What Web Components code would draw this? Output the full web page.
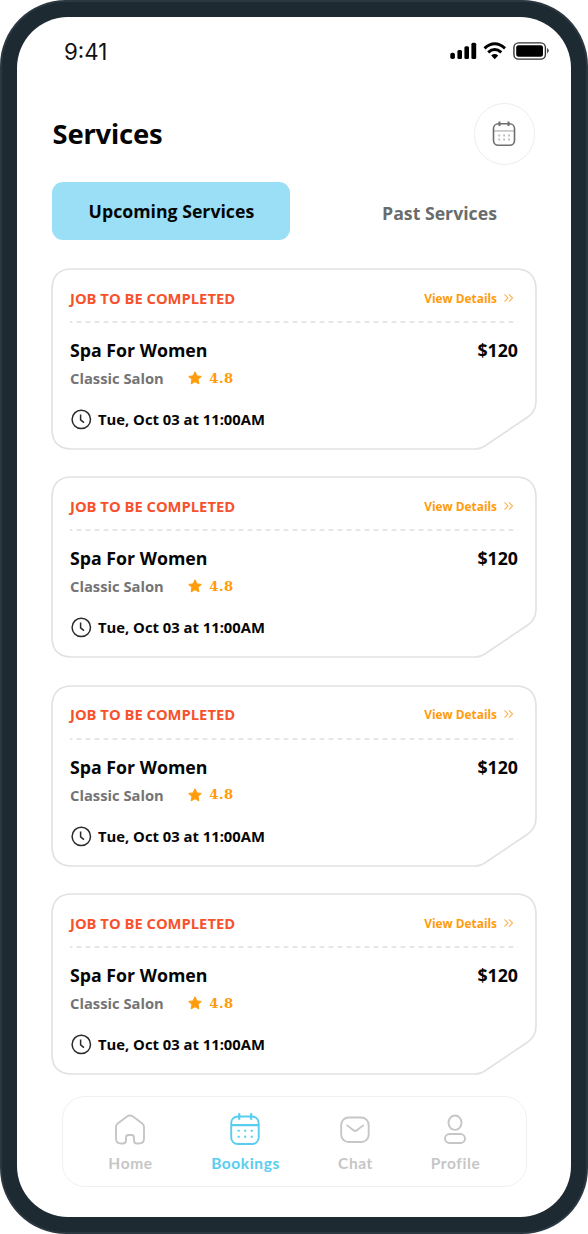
<!DOCTYPE html>
<html lang="en">
<head>
<meta charset="utf-8">
<title>Services</title>
<style>
html,body{margin:0;background:#fff}
body{font-family:"Open Sans","Noto Sans",sans-serif;font-weight:700;color:#050505}
</style>
</head>
<body>
<phone-frame>
  <status-bar time="9:41"></status-bar>
  <page-header>Services</page-header>
  <service-tabs><span slot="current">Upcoming Services</span><span slot="other">Past Services</span></service-tabs>
  <card-list>
    <job-card></job-card>
    <job-card></job-card>
    <job-card></job-card>
    <job-card></job-card>
  </card-list>
  <nav-bar>
    <nav-item icon="home" style="width:70px">Home</nav-item>
    <nav-item icon="calendar" active style="width:80px">Bookings</nav-item>
    <nav-item icon="chat" style="width:60px">Chat</nav-item>
    <nav-item icon="profile" style="width:70px">Profile</nav-item>
  </nav-bar>
</phone-frame>
<script>
const define = (name, html) => customElements.define(name, class extends HTMLElement {
  constructor() {
    super();
    const t = document.createElement('template');
    t.innerHTML = typeof html === 'function' ? html(this) : html;
    this.attachShadow({mode: 'open'}).append(t.content.cloneNode(true));
  }
});

define('phone-frame', `<style>
:host{display:block;box-sizing:border-box;width:588px;height:1234px;padding:2px;background:#2b3841;border-radius:66px;overflow:hidden}
.body{box-sizing:border-box;height:1230px;padding:15px;background:#1e2a32;border-radius:64px}
.screen{box-sizing:border-box;height:1200px;background:#fff;border-radius:51px;display:flex;flex-direction:column;overflow:hidden}
</style><div class="body"><div class="screen"><slot></slot></div></div>`);

define('status-bar', el => `<style>
:host{display:flex;justify-content:space-between;align-items:center;height:68px;padding:0 21px 0 47px;font:400 22.3px Inter,sans-serif;color:#111;box-sizing:border-box}
svg{display:block}
</style><span class="time">${el.getAttribute('time')}</span>
<svg width="100" height="20" viewBox="450 41 100 20">
<g fill="#000"><rect x="450.3" y="52.7" width="4.6" height="6.4" rx="1.8"/><rect x="457.4" y="50" width="4.6" height="9.1" rx="1.5"/><rect x="464.4" y="46.3" width="4.6" height="12.8" rx="1.5"/><rect x="471.4" y="42.8" width="4.8" height="16.3" rx="1.5"/></g>
<g fill="none" stroke="#000" stroke-width="3"><path d="M484.5 48.3Q494.7 39.3 505 48.3"/><path d="M488.2 52.3Q494.7 46.6 501.3 52.3"/></g><path d="M491.2 55.4Q494.7 52.8 498.2 55.4L494.7 59.2Z"/>
<rect x="513.9" y="42.9" width="31.5" height="16.2" rx="4.6" fill="none" stroke="#333" stroke-width="1.4"/><rect x="516.2" y="45.2" width="26.8" height="11.6" rx="2.4"/><path d="M547.3 48Q549.9 50.7 547.3 53.4Z"/>
</svg>`);

define('page-header', `<style>
:host{display:flex;justify-content:space-between;align-items:center;height:62px;margin-top:18px;padding:0 36px 0 35.5px}
h1{margin:0 0 2px;font:700 27.3px "Noto Sans",sans-serif;letter-spacing:-.15px}
.button{box-sizing:border-box;width:61.5px;height:61.5px;border:1.5px solid #ececec;border-radius:50%;display:grid;place-items:center}
svg{display:block}
</style><h1><slot></slot></h1><div class="button"><svg width="26" height="28" viewBox="491.5 120 26 28" fill="none" stroke="#6e6e6e" stroke-width="1.6"><path stroke="#c9c9c9" stroke-width="1.8" d="M494 130.9H515"/><rect x="494" y="123.8" width="21" height="21.5" rx="4.8"/><path stroke-width="2" d="M500 121.6V126M509 121.6V126"/><path stroke="#bbb" stroke-width="1.8" d="M498.8 135.5h1.8M503.7 135.5h1.8M508.6 135.5h1.8M498.8 139.5h1.8M503.7 139.5h1.8M508.6 139.5h1.8"/></svg></div>`);

define('service-tabs', `<style>
:host{display:flex;height:58px;margin:17px 36px 0 35.4px;font-size:17.7px;justify-content:space-between}
div{display:grid;place-items:center}
.on{width:238px;height:58px;border-radius:11px;background:#9adff6}
.off{width:191px;height:61px;color:#696c6c}
</style><div class="on"><slot name="current"></slot></div><div class="off"><slot name="other"></slot></div>`);

define('card-list', `<style>:host{display:flex;flex-direction:column;gap:27.4px;margin:28px 34px 0 34px}</style><slot></slot>`);

define('job-card', `<style>
:host{display:block;position:relative;width:486px;height:181px;box-sizing:border-box;padding:18.5px 19px 0}
.outline{position:absolute;left:0;top:0}
svg{display:block;flex:none}
.row{display:flex;align-items:center;justify-content:space-between;white-space:nowrap}
.top{height:22px}
.status{color:#f8522d;font-size:14.75px}
.view{color:#ff9c0b;font-size:11.85px;display:flex;align-items:center;gap:6px;padding-right:4px}
.dash{margin:12.5px 0 0 -.5px}
.main{height:28px;margin-top:13px;font-size:17.75px}
.sub{height:26px;margin-top:1px;justify-content:flex-start;font-size:14.75px;color:#747474}
.star{margin:0 7px 0 24.5px}
.score{font:700 13.2px "DejaVu Serif",serif;letter-spacing:.5px;color:#ff9c0b}
.when{height:28px;justify-content:flex-start;gap:6px;margin-top:14px;font-size:14.8px}
</style>
<svg class="outline" width="486" height="182" viewBox="0 0 486 182" fill="none" stroke="#e2e2e2" stroke-width="1.7"><path d="M21 1H464Q485 1 485 22V133Q485 143 477.5 148.5L436 176.5Q430 181 424 181H21Q1 181 1 161V22Q1 1 21 1Z"/></svg>
<div class="row top"><span class="status">JOB TO BE COMPLETED</span><span class="view">View Details<svg width="11" height="10" viewBox="0 0 11 10" fill="none" stroke="#ffb450" stroke-width="1.1"><path d="M1.5 1.3L5 5L1.5 8.7M6 1.3L9.5 5L6 8.7"/></svg></span></div>
<svg class="dash" width="448" height="2"><path d="M0 1H448" stroke="#dedede" stroke-width="1.6" stroke-dasharray="4.8 4.2" stroke-dashoffset="2.4"/></svg>
<div class="row main"><span>Spa For Women</span><span>$120</span></div>
<div class="row sub"><span class="salon">Classic Salon</span><svg class="star" width="14" height="14" viewBox="0 0 14 14"><path fill="#ff9c0b" stroke="#ff9c0b" stroke-linejoin="round" d="M7 .8L8.9 4.9L13.3 5.4L10 8.4L10.9 12.9L7 10.7L3.1 12.9L4 8.4L.7 5.4L5.1 4.9Z"/></svg><span class="score">4.8</span></div>
<div class="row when"><svg width="22" height="22" viewBox="0 0 22 22" fill="none" stroke="#292929" stroke-width="1.5"><circle cx="11.3" cy="11.4" r="9.2"/><path d="M10.6 6.4V11.8L14 14.6"/></svg><span>Tue, Oct 03 at 11:00AM</span></div>`);

define('nav-bar', `<style>
:host{display:flex;box-sizing:border-box;width:465px;height:91.5px;margin:21.8px auto 0 44.5px;border:1.5px solid #efefef;border-radius:23px;padding:16px 0 0 33px}
::slotted(:nth-child(2)){margin-left:40px}::slotted(:nth-child(3)){margin-left:40px}::slotted(:nth-child(4)){margin-left:35px}
</style><slot></slot>`);

const icons = {
home: `<path d="M2 14Q2 11.7 3.7 10.4L13 3.5Q16 1.5 19 3.5L28.3 10.4Q30 11.7 30 14V25.5Q30 30.5 25 30.5H23Q20 30.5 20 27.5V24.5Q20 22 17.5 22H14.5Q12 22 12 24.5V27.5Q12 30.5 9 30.5H7Q2 30.5 2 25.5Z"/>`,
calendar: `<rect x="2.2" y="3.5" width="27.5" height="27.5" rx="6.5"/><path stroke-width="2.2" d="M2.2 12.2H29.700M10.200 .2V6.8M22.200 .2V6.8"/><path d="M8.700 17.7h2M15.200 17.7h2M21.700 17.7h2M8.700 23.7h2M15.200 23.7h2M21.700 23.7h2"/>`,
chat: `<rect x="2.2" y="4.500" width="27.5" height="24.5" rx="7.5"/><path stroke-linecap="round" d="M8.2 12.500Q10.700 14 13.700 16.800Q16.200 19 18.700 16.800Q21.700 14 24.200 12.500"/>`,
profile: `<ellipse cx="16" cy="9.7" rx="6.5" ry="7.2"/><rect x="6" y="21" width="20" height="9" rx="4.5"/>`};
define('nav-item', el => `<style>
:host{display:flex;flex-direction:column;align-items:center;color:#c6c6c6;font:700 15.5px Lato,sans-serif;letter-spacing:.6px}
:host([active]){color:#58cdf0}
svg{display:block}
.label{line-height:22px;margin-top:5px}
</style><svg width="33" height="34" viewBox="0 0 33 34" fill="none" stroke="currentColor" stroke-width="1.9">${icons[el.getAttribute('icon')]}</svg><span class="label"><slot></slot></span>`);
</script>
</body>
</html>
